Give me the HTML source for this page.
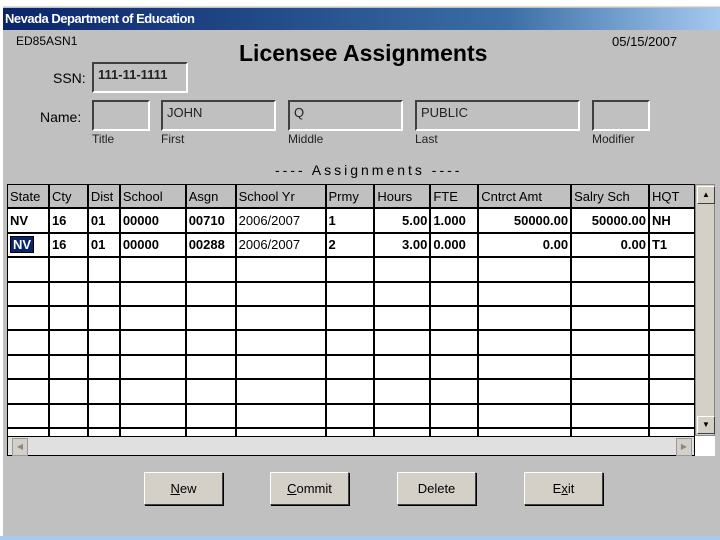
<!DOCTYPE html>
<html><head><style>
body{margin:0;width:720px;height:540px;background:#fff;font-family:"Liberation Sans",sans-serif;position:relative;overflow:hidden}
.win{position:absolute;left:3px;top:6px;width:717px;height:531px;background:#c0c0c0;border-top:1px solid #ddd}
.tb{position:absolute;left:3px;top:8px;width:717px;height:22px;background:linear-gradient(90deg,#0a246a,#3a6ea5 70%,#a6caf0);color:#fff;font-weight:bold;font-size:13px;line-height:22px;padding-left:2px;letter-spacing:-0.5px}
.a{position:absolute;font-size:13px;color:#000;white-space:nowrap}
.box{position:absolute;border-top:2px solid #404040;border-left:2px solid #404040;border-right:2px solid #fff;border-bottom:2px solid #fff;box-sizing:border-box;font-size:13px;padding:3px 4px;font-weight:bold;color:#222}
.lbl{position:absolute;font-size:12px;color:#222}
.grid{position:absolute;left:7px;top:184px;width:688px;height:252px;background:#fff;border:1px solid #000;overflow:hidden}
table{border-collapse:collapse;position:absolute;left:0;top:0;table-layout:fixed}
td{border:1px solid #000;border-width:0 2px 2px 0;height:22.4px;padding:0 2px;font-size:13px;font-weight:bold;white-space:nowrap;overflow:hidden}
tr.h td{background:#c0c0c0;font-weight:normal;border-bottom:2px solid #000}
td.r{text-align:right}
.btn{position:absolute;top:472px;width:77px;height:31px;background:#d4d0c8;border:1px solid;border-color:#fff #404040 #404040 #fff;box-shadow:1px 1px 0 #000;font-size:13px;text-align:center;line-height:31px}
</style></head><body>
<div class="win"></div>
<div class="tb">Nevada Department of Education</div>
<div class="a" style="left:16px;top:34px;font-size:12px">ED85ASN1</div>
<div class="a" style="left:239px;top:40px;font-size:23px;font-weight:bold">Licensee Assignments</div>
<div class="a" style="left:612px;top:34px;font-size:13px">05/15/2007</div>
<div class="a" style="left:53px;top:70px;font-size:14px">SSN:</div>
<div class="box" style="left:92px;top:62px;width:96px;height:31px">111-11-1111</div>
<div class="a" style="left:40px;top:109px;font-size:14px">Name:</div>
<div class="box" style="left:92px;top:100px;width:58px;height:31px"></div>
<div class="box" style="left:161px;top:100px;width:115px;height:31px;font-weight:normal">JOHN</div>
<div class="box" style="left:288px;top:100px;width:115px;height:31px;font-weight:normal">Q</div>
<div class="box" style="left:415px;top:100px;width:165px;height:31px;font-weight:normal">PUBLIC</div>
<div class="box" style="left:592px;top:100px;width:58px;height:31px"></div>
<div class="lbl" style="left:92px;top:132px">Title</div>
<div class="lbl" style="left:161px;top:132px">First</div>
<div class="lbl" style="left:288px;top:132px">Middle</div>
<div class="lbl" style="left:415px;top:132px">Last</div>
<div class="lbl" style="left:592px;top:132px">Modifier</div>
<div class="a" style="left:275px;top:162px;font-size:14px;letter-spacing:3px">---- Assignments ----</div>
<div class="grid">
<table>
<colgroup><col style="width:41px"><col style="width:39px"><col style="width:32px"><col style="width:66px"><col style="width:50px"><col style="width:90px"><col style="width:49px"><col style="width:56px"><col style="width:48px"><col style="width:93px"><col style="width:78px"><col style="width:46px"></colgroup>
<tr class="h"><td>State</td><td>Cty</td><td>Dist</td><td>School</td><td>Asgn</td><td>School Yr</td><td>Prmy</td><td>Hours</td><td>FTE</td><td>Cntrct Amt</td><td>Salry Sch</td><td>HQT</td></tr>
<tr><td>NV</td><td>16</td><td>01</td><td>00000</td><td>00710</td><td style="font-weight:normal">2006/2007</td><td>1</td><td class="r">5.00</td><td>1.000</td><td class="r">50000.00</td><td class="r">50000.00</td><td>NH</td></tr>
<tr style="border-top:2px solid #1a2a50"><td><span style="background:#0a246a;color:#fff;padding:0 2px;border:1px solid #000">NV</span></td><td>16</td><td>01</td><td>00000</td><td>00288</td><td style="font-weight:normal">2006/2007</td><td>2</td><td class="r">3.00</td><td>0.000</td><td class="r">0.00</td><td class="r">0.00</td><td>T1</td></tr>
<tr><td></td><td></td><td></td><td></td><td></td><td></td><td></td><td></td><td></td><td></td><td></td><td></td></tr>
<tr><td></td><td></td><td></td><td></td><td></td><td></td><td></td><td></td><td></td><td></td><td></td><td></td></tr>
<tr><td></td><td></td><td></td><td></td><td></td><td></td><td></td><td></td><td></td><td></td><td></td><td></td></tr>
<tr><td></td><td></td><td></td><td></td><td></td><td></td><td></td><td></td><td></td><td></td><td></td><td></td></tr>
<tr><td></td><td></td><td></td><td></td><td></td><td></td><td></td><td></td><td></td><td></td><td></td><td></td></tr>
<tr><td></td><td></td><td></td><td></td><td></td><td></td><td></td><td></td><td></td><td></td><td></td><td></td></tr>
<tr><td></td><td></td><td></td><td></td><td></td><td></td><td></td><td></td><td></td><td></td><td></td><td></td></tr>
<tr><td></td><td></td><td></td><td></td><td></td><td></td><td></td><td></td><td></td><td></td><td></td><td></td></tr>
</table>
</div>
<div style="position:absolute;left:7px;top:436px;width:688px;height:20px;background:#e0e0e0;border:1px solid #000;box-sizing:border-box">
 <div style="position:absolute;left:4px;top:1px;width:14px;height:16px;background:#d4d0c8;border:1px solid #999;font-size:8px;color:#888;text-align:center;line-height:16px">◀</div>
 <div style="position:absolute;right:2px;top:1px;width:14px;height:16px;background:#d4d0c8;border:1px solid #999;font-size:8px;color:#888;text-align:center;line-height:16px">▶</div>
</div>
<div style="position:absolute;left:695px;top:184px;width:20px;height:252px;background:#d4d0c8;border:1px solid #888;box-sizing:border-box">
 <div style="position:absolute;left:1px;top:1px;width:16px;height:16px;border:1px solid;border-color:#fff #404040 #404040 #fff;font-size:8px;text-align:center;line-height:16px">▲</div>
 <div style="position:absolute;left:1px;bottom:1px;width:16px;height:16px;border:1px solid;border-color:#fff #404040 #404040 #fff;font-size:8px;text-align:center;line-height:16px">▼</div>
</div>
<div style="position:absolute;left:695px;top:436px;width:20px;height:20px;background:#fff"></div>
<div class="btn" style="left:144px"><u>N</u>ew</div>
<div class="btn" style="left:270px"><u>C</u>ommit</div>
<div class="btn" style="left:397px">Delete</div>
<div class="btn" style="left:524px">E<u>x</u>it</div>
<div style="position:absolute;left:0;top:536px;width:720px;height:4px;background:#a6caf0"></div>
</body></html>
